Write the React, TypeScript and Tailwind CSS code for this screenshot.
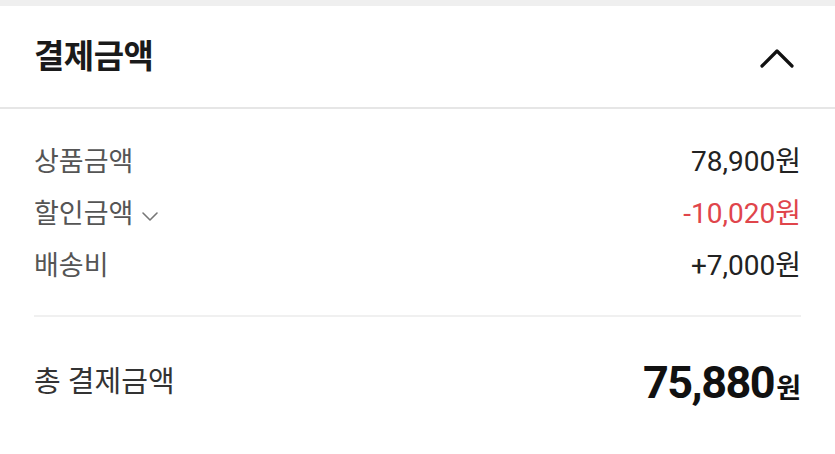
const font = {
  fontFamily: 'Roboto, "Noto Sans CJK KR", sans-serif',
};

const rows = [
  { label: "상품금액", value: "78,900원", tone: "text-[#222222]" },
  { label: "할인금액", value: "-10,020원", tone: "text-[#e0454b]", toggle: true },
  { label: "배송비", value: "+7,000원", tone: "text-[#222222]" },
];

function CaretUp() {
  return (
    <svg width="38" height="24" viewBox="0 0 38 24" fill="none" className="mt-[2px]">
      <polyline points="4,20 19,5 34,20" stroke="#111111" strokeWidth="3.2" strokeLinecap="round" strokeLinejoin="round" />
    </svg>
  );
}

function CaretDown() {
  return (
    <svg width="18" height="12" viewBox="0 0 18 12" fill="none" className="mt-[4px]">
      <polyline points="2,3 9,10 16,3" stroke="#777777" strokeWidth="1.6" strokeLinecap="round" strokeLinejoin="round" />
    </svg>
  );
}

export default function App() {
  return (
    <div className="w-[835px] h-[454px] bg-white" style={font}>
      {/* top gap from the previous section */}
      <div className="h-[6px] bg-[#efefef]" />

      {/* ── Header ── */}
      <div className="h-[103px] flex items-center justify-between pl-[34px] pr-[39px] border-b-2 border-[#e6e6e6]">
        <h2 className="text-[33px] font-bold text-[#1a1a1a] tracking-[-0.5px]">결제금액</h2>
        <CaretUp />
      </div>

      {/* ── Breakdown ── */}
      <div className="px-[34px] pt-[27px]">
        {rows.map((r) => (
          <div key={r.label} className="h-[52px] flex items-center justify-between">
            <div className="flex items-center gap-[8px] text-[27px] text-[#555555]">
              <span>{r.label}</span>
              {r.toggle && <CaretDown />}
            </div>
            <span className={`text-[28px] ${r.tone}`}>{r.value}</span>
          </div>
        ))}

        <div className="mt-[23px] h-[2px] bg-[#f0f0f0]" />

        <div className="h-[132px] flex items-center justify-between">
          <span className="text-[29px] text-[#333333]">총 결제금액</span>
          <span className="flex items-baseline text-[#111111] font-bold">
            <span className="text-[45px] tracking-[-1.5px]">75,880</span>
            <span className="text-[27px] ml-[2px]">원</span>
          </span>
        </div>
      </div>
    </div>
  );
}
